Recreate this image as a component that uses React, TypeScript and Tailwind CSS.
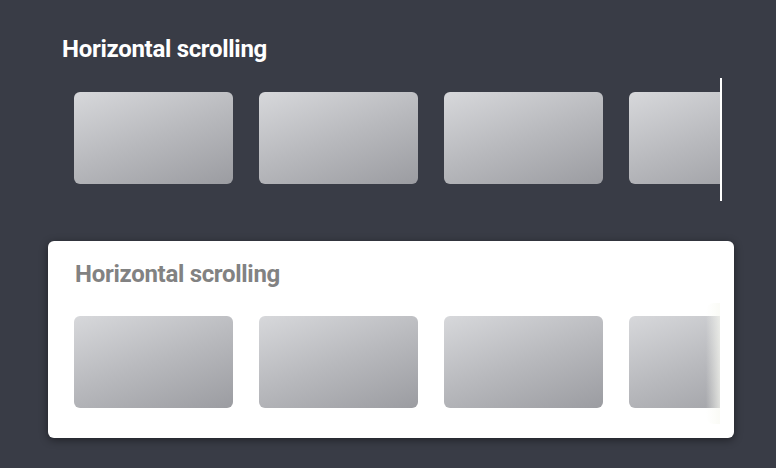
const cards = [0, 1, 2, 3, 4];

function Card() {
  return (
    <div className="h-[92px] w-[159px] shrink-0 rounded-[6px] bg-[linear-gradient(160deg,#d7d8db_0%,#b8b9bd_50%,#9b9ca1_100%)]" />
  );
}

export default function App() {
  return (
    <div className="h-[468px] w-[776px] overflow-hidden bg-[#393c46] font-['Roboto',sans-serif]">
      <div className="pl-[62px] pt-[35px]">
        <h2 className="text-[24px] font-bold leading-[28px] tracking-[-0.3px] text-white">
          Horizontal scrolling
        </h2>
        <div className="mt-[15px] ml-[12px] flex h-[123px] w-[648px] items-start gap-[26px] overflow-hidden border-r-2 border-white pt-[14px]">
          {cards.map((c) => (
            <Card key={c} />
          ))}
        </div>
      </div>
      <div className="mx-[48px] mt-[40px] h-[197px] w-[686px] rounded-[6px] bg-white pl-[27px] pt-[19px] shadow-[0_2px_8px_rgba(0,0,0,0.45)]">
        <h2 className="text-[24px] font-bold leading-[28px] tracking-[-0.3px] text-[#828282]">
          Horizontal scrolling
        </h2>
        <div className="relative mt-[28px] -ml-px w-[646px]">
          <div className="flex gap-[26px] overflow-hidden">
            {cards.map((c) => (
              <Card key={c} />
            ))}
          </div>
          <div className="absolute right-0 top-[-13px] bottom-[-16px] w-[14px] rounded-l-[8px] bg-[linear-gradient(90deg,rgba(250,250,244,0)_0%,rgba(248,249,242,0.7)_100%)]" />
        </div>
      </div>
    </div>
  );
}
